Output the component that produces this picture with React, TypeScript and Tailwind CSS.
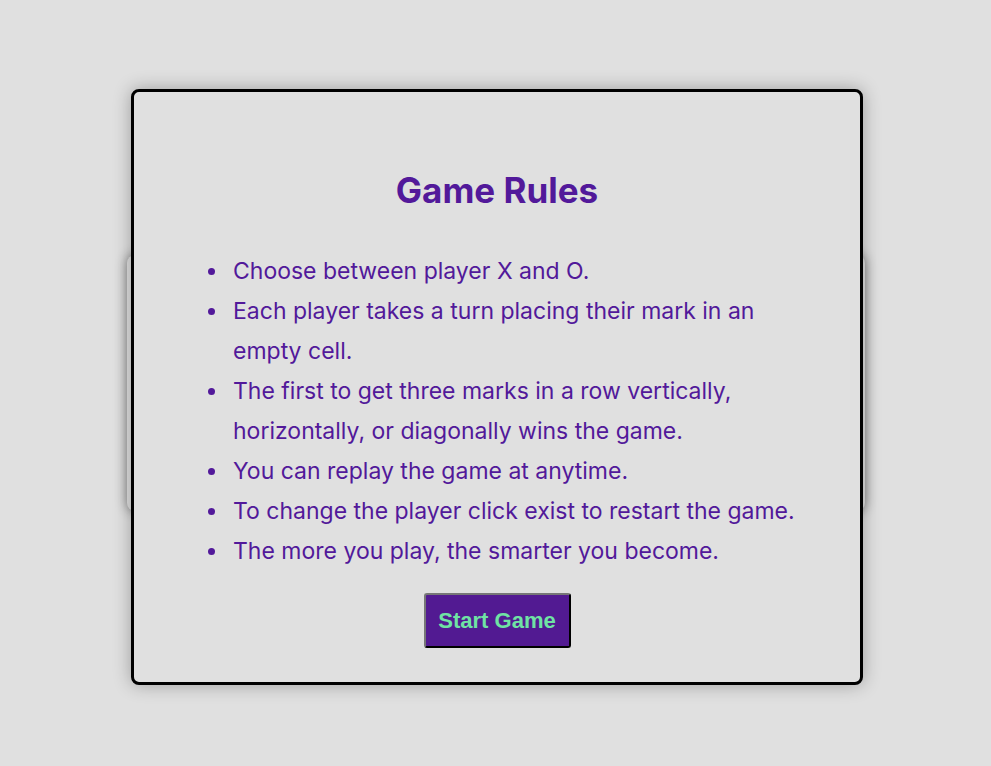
import React from 'react';

const rules = [
  'Choose between player X and O.',
  'Each player takes a turn placing their mark in an empty cell.',
  'The first to get three marks in a row vertically, horizontally, or diagonally wins the game.',
  'You can replay the game at anytime.',
  'To change the player click exist to restart the game.',
  'The more you play, the smarter you become.',
];

export default function App() {
  return (
    <div className="relative flex h-[766px] w-full items-center justify-center bg-[#e0e0e0] font-['Inter',sans-serif]">
      {/* board underneath the rules modal */}
      <div className="h-[256px] w-[738px] rounded-lg bg-[#e0e0e0] shadow-[0_0_12px_rgba(0,0,0,0.45)]" />

      <div className="absolute left-[131px] top-[89px] flex h-[596px] w-[732px] flex-col items-center rounded-lg border-[3px] border-black bg-[#e0e0e0] pt-[78px] shadow-[0_0_18px_rgba(0,0,0,0.3)]">
        <h1 className="text-[35px] font-bold leading-[40px] text-[#52199a]">Game Rules</h1>

        <ul className="mt-[41px] w-[620px] pl-[46px] text-[23px] leading-[40px] text-[#52199a]">
          {rules.map((r) => (
            <li key={r} className="flex">
              <span className="ml-[-25px] mr-[18px] mt-[17px] h-[7px] w-[7px] shrink-0 rounded-full bg-[#52199a]" />
              <span>{r}</span>
            </li>
          ))}
        </ul>

        <button className="mt-[22px] h-[55px] w-[147px] rounded-[3px] border-2 border-b-black border-l-[#777] border-r-black border-t-[#777] bg-[#521a92] font-['Liberation_Sans',sans-serif] text-[22px] font-bold text-[#6fe3a4]">
          Start Game
        </button>
      </div>
    </div>
  );
}
